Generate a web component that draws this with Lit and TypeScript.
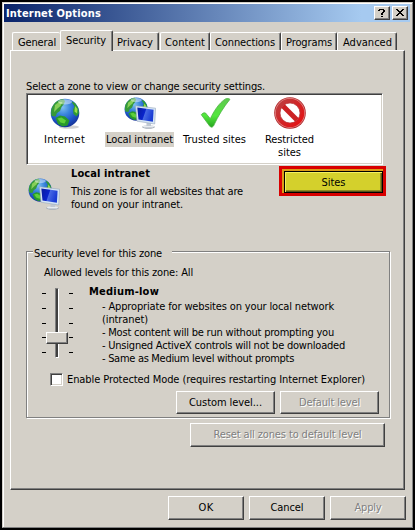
import { LitElement, html, css, svg } from "lit";
import { customElement, property } from "lit/decorators.js";

@customElement("ui-text")
class UiText extends LitElement {
  @property({ type: Number }) w = 0;
  static styles = css`
    :host { display: inline-block; white-space: pre; line-height: 13px; height: 13px; }
    span { display: inline-block; }
  `;
  render() {
    return html`<span><slot></slot></span>`;
  }
  firstUpdated() {
    const span = this.renderRoot.querySelector("span") as HTMLElement;
    const n = (this.textContent || "").length;
    const natural = span.getBoundingClientRect().width;
    if (this.w && n) {
      span.style.letterSpacing = (this.w - natural) / n + "px";
      this.style.width = this.w + "px";
    }
  }
}

const globe = (id: string) => svg`
  <defs>
    <radialGradient id="${id}" cx="0.42" cy="0.3" r="0.75">
      <stop offset="0" stop-color="#7fc0f0"/><stop offset="0.35" stop-color="#3a86dc"/>
      <stop offset="0.7" stop-color="#1c50c4"/><stop offset="1" stop-color="#142c8c"/>
    </radialGradient>
  </defs>
  <circle cx="15" cy="15" r="14.3" fill="url(#${id})"/>
  <path d="M3 7.500 C5.500 3.500 9 1.500 13 1 L15 3 L14 6 L11.500 9 L10 13 L7 15 L5.500 18.500 L1.500 18 C0.500 13 1.500 10 3 7.500Z" fill="#379a38"/>
  <path d="M5 7 L9 4 L12.500 4 L10.500 8 L7.500 10.500 L4 14Z" fill="#86cf58"/>
  <path d="M5.500 20 L10 17.500 L15 18.500 L19.500 22.500 L17.500 27.500 L12.500 28.500 L8 26Z" fill="#289a2b"/>
  <path d="M7.500 20.500 L11.500 19.500 L16 22.500 L14.500 25.500 L10.500 24.500Z" fill="#5fd03a"/>
  <path d="M21.500 3.500 L25 5 L28 9.500 L29 15 L26.500 18.500 L23.500 16 L23 11.500 L24.500 8.500Z" fill="#2f9a34"/>
  <path d="M25 8 L27.500 11 L27 15.500 L24.500 13.500Z" fill="#9ade4a"/>
  <ellipse cx="15" cy="3.800" rx="7" ry="2.600" fill="#fff" opacity="0.45"/>`;

const internetIcon = html`<svg viewBox="0 0 32 32" width="32" height="32">
  <ellipse cx="20" cy="30" rx="10" ry="1.800" fill="#000" opacity="0.18"/>
  <g transform="translate(1,1)">${globe("g1")}</g></svg>`;

const intranetIcon = (id: string) => html`<svg viewBox="0 0 32 32" width="32" height="32">
  <defs><linearGradient id="${id}s" x1="0" y1="0" x2="1" y2="0.3">
    <stop offset="0" stop-color="#0a1c9c"/><stop offset="0.5" stop-color="#0a24cc"/>
    <stop offset="0.56" stop-color="#4668e4"/><stop offset="1" stop-color="#1a3cd4"/></linearGradient></defs>
  <g transform="scale(0.81)">${globe(id)}</g>
  <ellipse cx="24.500" cy="30" rx="6.300" ry="1.700" fill="#a4adb8"/>
  <ellipse cx="24.500" cy="29.400" rx="5.600" ry="1.200" fill="#e8ecf0"/>
  <path d="M22.500 24 L27 24.500 L27 29 L22.500 29Z" fill="#c0c8d2"/>
  <path d="M11.500 8.800 L31.600 11.200 L30.700 27 L13 24.200Z" fill="#d4e4f4" stroke="#98a8bc" stroke-width="0.600"/>
  <path d="M13.300 10.600 L29.600 12.700 L28.900 24.700 L14.500 22.400Z" fill="url(#${id}s)"/></svg>`;

const checkIcon = html`<svg viewBox="0 0 32 32" width="32" height="32">
  <defs><linearGradient id="ck" x1="0" y1="0" x2="0" y2="1">
    <stop offset="0" stop-color="#5fc850"/><stop offset="0.6" stop-color="#52e83c"/><stop offset="1" stop-color="#27a51f"/></linearGradient></defs>
  <path d="M2.300 17.700 C3.500 16 5 15.600 6.500 16 L11.300 21.700 C15 14 20 6 26.500 1.900 C28.500 1.300 30.500 1.600 30.900 2.400 C25 9.500 19 19 14.500 29 C13.500 30.600 11.500 30.500 10.600 29Z"
    fill="url(#ck)" stroke="#4db342" stroke-width="0.800"/></svg>`;

const stopIcon = html`<svg viewBox="0 0 32 32" width="32" height="32">
  <defs><linearGradient id="st" x1="0" y1="0" x2="1" y2="1">
    <stop offset="0" stop-color="#b84848"/><stop offset="0.4" stop-color="#cd2a2c"/><stop offset="1" stop-color="#ea0c0e"/></linearGradient></defs>
  <circle cx="16" cy="16" r="15.800" fill="#b02a2c"/>
  <circle cx="16" cy="16" r="15" fill="#e58a8a"/>
  <circle cx="16" cy="16" r="14.300" fill="url(#st)"/>
  <circle cx="16" cy="16" r="10" fill="#fff" stroke="#b63a3c" stroke-width="0.700"/>
  <path d="M9 9 L23 23" stroke="#cc2224" stroke-width="5"/></svg>`;

@customElement("app-root")
class AppRoot extends LitElement {
  static styles = css`
    * { box-sizing: border-box; }
    :host {
      box-sizing: border-box;
      display: block; width: 415px; height: 530px; overflow: hidden; background: #000;
      padding: 2px; font: 11px/13px "DejaVu Sans Condensed", "DejaVu Sans", sans-serif;
      font-stretch: condensed; color: #000; cursor: default;
    }
    svg { display: block; }
    .bold { font-weight: bold; }
    .window {
      width: 411px; height: 526px; background: #d4d0c8; padding: 1px 2px 0 1px;
      border: 1px solid #d4d0c8; border-right-color: #808080; border-bottom-color: #808080;
      box-shadow: inset 1px 1px #fff;
    }
    .title {
      height: 18px; display: flex; align-items: center; padding: 0 2px; gap: 2px;
      background: linear-gradient(90deg, #0a246a, #a6caf0 88%); color: #fff;
    }
    .title ui-text { margin-right: auto; }
    .cap {
      width: 16px; height: 14px; background: #d4d0c8; border: 1px solid;
      border-color: #fff #404040 #404040 #fff; box-shadow: inset -1px -1px #808080;
    }
    .tabs { display: flex; align-items: flex-end; height: 28px; padding-left: 8px; }
    .tab {
      height: 18px; padding: 3px 0 0 5px; border: solid; border-width: 1px 1px 0 1px;
      border-color: #fff #404040 #fff #fff; border-radius: 2px 2px 0 0; box-shadow: inset -1px 0 #808080;
    }
    .tab.on { height: 21px; margin-bottom: -1px; background: #d4d0c8; z-index: 1; }
    .t0 { width: 48px; } .t1 { width: 53px; } .t2 { width: 46px; } .t3 { width: 50px; }
    .t4 { width: 71px; } .t5 { width: 56px; } .t6 { width: 60px; }
    .t2 { border-left: 0; padding-left: 4px; }
    .t3 { margin-left: 1px; padding-left: 4px; }
    .t4, .t5 { padding-left: 4px; }
    .t0 { border-right: 0; box-shadow: none; }
    .panel {
      margin-left: 6px; width: 395px; height: 440px; padding: 29px 0 0 15px;
      border: 1px solid; border-color: #fff #404040 #404040 #fff; box-shadow: inset -1px -1px #808080;
    }
    .panel > ui-text { display: block; }
    .list {
      width: 357px; height: 72px; background: #fff; display: flex; padding-top: 3px;
      border: 1px solid; border-color: #808080 #fff #fff #808080;
      box-shadow: inset 1px 1px #404040, inset -1px -1px #d4d0c8;
    }
    .zone { width: 75px; display: flex; flex-direction: column; align-items: center; }
    .zone .lbl { margin-top: 3px; padding: 1px; display: flex; flex-direction: column; align-items: center; }
    .zone.sel .lbl { background: #d4d0c8; }
    .desc { display: flex; height: 86px; }
    .desc > svg { margin: 13px 11px 0 2px; }
    .desc .txt { width: 208px; padding-top: 2px; display: flex; flex-direction: column; }
    .desc .txt ui-text:first-child { margin-bottom: 5px; }
    .mark { width: 107px; height: 30px; border: 3px solid #d80000; padding: 2px 0 0 2px; background: #dc9c18; margin-top: 1px; }
    .sites {
      width: 99px; height: 22px; background: #d4d02c; border: 1px solid #000; display: grid; place-items: center;
      box-shadow: inset 1px 1px #f4f060, inset -1px -1px #57551a, inset -2px -2px #8c8a22;
    }
    .group {
      width: 364px; height: 167px; border: 1px solid #808080; padding-left: 17px;
      box-shadow: 1px 1px #fff, inset 1px 1px #fff;
    }
    .legend { width: 139px; height: 13px; background: #d4d0c8; margin: -5px 0 0 -11px; padding-left: 1px; }
    .allowed { margin-top: 6px; height: 13px; }
    .level { display: flex; margin-top: 6px; height: 81px; }
    .slider { display: flex; width: 45px; padding-top: 3px; }
    .ticks { width: 4px; margin: 5px 0 0 -2px; height: 60px; display: flex; flex-direction: column; justify-content: space-between; }
    .ticks i { height: 1px; background: #000; }
    .track {
      flex: none; width: 4px; height: 70px; margin: 0 12px 0 9px; border: 1px solid; border-color: #808080 #fff #fff #808080;
      background: #404040; display: flex; justify-content: center; padding-top: 43px;
    }
    .thumb {
      flex: none; width: 22px; height: 12px; background: #d4d0c8; border: 1px solid;
      border-color: #fff #404040 #404040 #fff; box-shadow: inset -1px -1px #808080;
    }
    .rules { padding-left: 13px; display: flex; flex-direction: column; }
    .rules ui-text:first-child { margin: 0 0 2px -13px; }
    .protect { display: flex; align-items: center; gap: 4px; margin: 7px 0 0 6px; height: 13px; }
    .protect ui-text { margin-top: -1px; }
    .box {
      width: 13px; height: 13px; background: #fff; border: 1px solid; border-color: #808080 #fff #fff #808080;
      box-shadow: inset 1px 1px #404040, inset -1px -1px #d4d0c8;
    }
    .btn {
      width: 99px; height: 23px; display: grid; place-items: center; border: 1px solid;
      border-color: #fff #404040 #404040 #fff; box-shadow: inset -1px -1px #808080;
    }
    .btn ui-text { margin-top: -1px; }
    .btn.off { color: #808080; text-shadow: 1px 1px #fff; }
    .pair { display: flex; gap: 5px; margin: 5px 0 0 132px; }
    .reset { width: 195px; height: 24px; margin: 5px 0 0 164px; }
    .foot { display: flex; gap: 5px; margin: 6px 0 0 164px; }
    .foot .btn { width: 76px; height: 24px; }
  `;

  render() {
    const tabs: [string, number][] = [
      ["General", 38], ["Security", 40], ["Privacy", 36], ["Content", 40],
      ["Connections", 60], ["Programs", 46], ["Advanced", 49],
    ];
    const rules: [string, number][] = [
      ["- Appropriate for websites on your local network", 232],
      ["(intranet)", 46],
      ["- Most content will be run without prompting you", 232],
      ["- Unsigned ActiveX controls will not be downloaded", 243],
      ["- Same as Medium level without prompts", 192],
    ];
    return html`
      <div class="window">
        <div class="title">
          <ui-text class="bold" w="95">Internet Options</ui-text>
          <div class="cap"><svg width="14" height="12" shape-rendering="crispEdges">
            <path d="M4 2h5M3 3h2M8 3h2M8 4h2M7 5h2M6 6h2M6 7h2M6 9h2" transform="translate(0,0.5)" stroke="#000" fill="none"/></svg></div>
          <div class="cap"><svg width="14" height="12" shape-rendering="crispEdges">
            <path d="M3 2h2M9 2h2M4 3h2M8 3h2M5 4h4M6 5h2M5 6h4M4 7h2M8 7h2M3 8h2M9 8h2" transform="translate(0,0.5)" stroke="#000" fill="none"/></svg></div>
        </div>
        <div class="tabs">
          ${tabs.map(([t, w], i) => html`<div class="tab t${i} ${i === 1 ? "on" : ""}"><ui-text w=${w}>${t}</ui-text></div>`)}
        </div>
        <div class="panel">
          <ui-text w="239">Select a zone to view or change security settings.</ui-text>
          <div class="list">
            <div class="zone">${internetIcon}<div class="lbl"><ui-text w="41">Internet</ui-text></div></div>
            <div class="zone sel">${intranetIcon("g2")}<div class="lbl"><ui-text w="67">Local intranet</ui-text></div></div>
            <div class="zone">${checkIcon}<div class="lbl"><ui-text w="63">Trusted sites</ui-text></div></div>
            <div class="zone">${stopIcon}<div class="lbl"><ui-text w="49">Restricted</ui-text><ui-text w="23">sites</ui-text></div></div>
          </div>
          <div class="desc">
            ${intranetIcon("g3")}
            <div class="txt">
              <ui-text class="bold" w="79">Local intranet</ui-text>
              <ui-text w="172">This zone is for all websites that are</ui-text>
              <ui-text w="112">found on your intranet.</ui-text>
            </div>
            <div class="mark"><div class="sites"><ui-text w="24">Sites</ui-text></div></div>
          </div>
          <div class="group">
            <div class="legend"><ui-text w="128">Security level for this zone</ui-text></div>
            <div class="allowed"><ui-text w="149">Allowed levels for this zone: All</ui-text></div>
            <div class="level">
              <div class="slider">
                <div class="ticks"><i></i><i></i><i></i><i></i><i></i></div>
                <div class="track"><div class="thumb"></div></div>
                <div class="ticks"><i></i><i></i><i></i><i></i><i></i></div>
              </div>
              <div class="rules">
                <ui-text class="bold" w="70">Medium-low</ui-text>
                ${rules.map(([t, w]) => html`<ui-text w=${w}>${t}</ui-text>`)}
              </div>
            </div>
            <div class="protect"><div class="box"></div><ui-text w="298">Enable Protected Mode (requires restarting Internet Explorer)</ui-text></div>
            <div class="pair">
              <div class="btn"><ui-text w="73">Custom level...</ui-text></div>
              <div class="btn off"><ui-text w="61">Default level</ui-text></div>
            </div>
          </div>
          <div class="btn off reset"><ui-text w="148">Reset all zones to default level</ui-text></div>
        </div>
        <div class="foot">
          <div class="btn"><ui-text w="15">OK</ui-text></div>
          <div class="btn"><ui-text w="33">Cancel</ui-text></div>
          <div class="btn off"><ui-text w="27">Apply</ui-text></div>
        </div>
      </div>`;
  }
}
